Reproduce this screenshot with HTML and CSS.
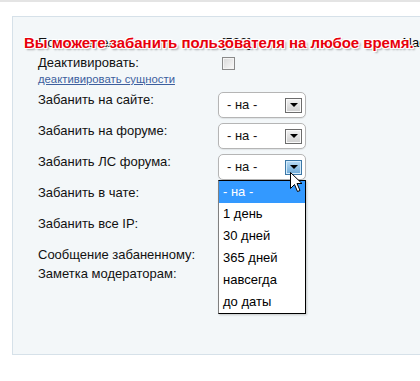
FILE: index.html
```html
<!DOCTYPE html>
<html lang="ru">
<head>
    <meta charset="UTF-8">
    <title>Бан пользователя</title>
    <link rel="stylesheet" href="styles.css">
</head>
<body>
    <div class="panel">
        <div class="notice">Вы можете забанить пользователя на любое время.</div>
        <div class="form">
            <div class="row head">
                <span class="label">Пользователь:</span>
                <span class="value">[533] <span class="name">Nagibator</span></span>
            </div>
            <div class="row">
                <span class="label">Деактивировать:</span>
                <span class="value"><span class="check"></span></span>
            </div>
            <div class="row link-row">
                <a href="#">деактивировать сущности</a>
            </div>
            <div class="row sel">
                <span class="label">Забанить на сайте:</span>
                <div class="select"><span>- на -</span><i class="arrow"></i></div>
            </div>
            <div class="row sel">
                <span class="label">Забанить на форуме:</span>
                <div class="select"><span>- на -</span><i class="arrow"></i></div>
            </div>
            <div class="row sel">
                <span class="label">Забанить ЛС форума:</span>
                <div class="select open"><span>- на -</span><i class="arrow"></i>
                    <ul class="options">
                        <li class="active">- на -</li>
                        <li>1 день</li>
                        <li>30 дней</li>
                        <li>365 дней</li>
                        <li>навсегда</li>
                        <li>до даты</li>
                    </ul>
                </div>
            </div>
            <div class="row sel">
                <span class="label">Забанить в чате:</span>
                <div class="select"><span>- на -</span><i class="arrow"></i></div>
            </div>
            <div class="row sel">
                <span class="label">Забанить все IP:</span>
                <div class="select"><span>- на -</span><i class="arrow"></i></div>
            </div>
            <div class="row msg">
                <span class="label">Сообщение забаненному:</span>
            </div>
            <div class="row">
                <span class="label">Заметка модераторам:</span>
            </div>
        </div>
    </div>
    <svg class="cursor" width="13" height="21" viewBox="0 0 13 21">
        <path d="M0.5 0.5 L0.5 16.5 L4.5 12.5 L7.5 19.5 L10 18.5 L7 11.5 L12 11.5 Z" fill="#fff" stroke="#000" stroke-width="1"/>
    </svg>
</body>
</html>
```

FILE: styles.css
```css
body {
    margin: 0;
    font-family: "Liberation Sans", Arial, sans-serif;
    font-size: 13px;
    color: #111;
    background: #fff;
    border-top: 2px solid #e4e4e4;
    overflow: hidden;
}
.panel {
    position: relative;
    margin: 14px -1px 0 12px;
    padding: 18px 0 72px 25px;
    background: #f3f7f9;
    border: 1px solid #d6e1e9;
    overflow: hidden;
}
.notice {
    position: absolute;
    top: 17px;
    left: 11px;
    font-size: 15px;
    line-height: 18px;
    font-weight: bold;
    color: #e8000b;
    white-space: nowrap;
    letter-spacing: -0.05px;
    z-index: 2;
    text-shadow: -1px -1px 0 #fff, 1px -1px 0 #fff, -1px 1px 0 #fff, 1px 1px 0 #fff,
        2px 2px 2px rgba(0, 0, 0, 0.35);
}
.form {
    display: flex;
    flex-direction: column;
}
.row {
    display: grid;
    grid-template-columns: 180px 1fr;
    align-items: start;
    line-height: 16px;
}
.head {
    margin-bottom: 4px;
}
.head .value {
    padding-left: 4px;
    white-space: nowrap;
    overflow: hidden;
}
.head .name {
    margin-left: 148px;
    color: #000;
}
.check {
    display: block;
    width: 11px;
    height: 11px;
    margin: 2px 0 0 4px;
    border: 1px solid #8a8a8a;
    background: linear-gradient(135deg, #d8d8d8, #fafafa);
    box-shadow: inset 0 0 0 1px #f4f4f4;
}
.link-row {
    display: block;
    margin: 1px 0 6px;
    line-height: 14px;
}
.link-row a {
    font-size: 11.3px;
    color: #3d5f9e;
}
.sel {
    margin-bottom: 5px;
}
.msg {
    margin-bottom: 3px;
}
.select {
    position: relative;
    box-sizing: border-box;
    width: 88px;
    height: 26px;
    border: 1px solid #b5b5b5;
    border-radius: 5px;
    background: #fff;
    display: flex;
    align-items: center;
    justify-content: space-between;
    padding: 0 3px 0 8px;
    box-shadow: 0 1px 1px rgba(0, 0, 0, 0.08);
}
.arrow {
    box-sizing: border-box;
    width: 17px;
    height: 15px;
    border: 1px solid #6c6c6c;
    background: linear-gradient(#f2f2f2, #cfcfcf);
    box-shadow: inset 0 0 0 1px #fafafa;
    display: flex;
    align-items: center;
    justify-content: center;
}
.arrow::after {
    content: "";
    border-left: 4px solid transparent;
    border-right: 4px solid transparent;
    border-top: 4px solid #000;
}
.open .arrow {
    border-color: #3b77a6;
    background: linear-gradient(#b9dcf5, #6ea9d6);
    box-shadow: inset 0 0 0 1px #d4ebfb;
}
.options {
    position: absolute;
    top: 25px;
    left: -1px;
    width: 88px;
    box-sizing: border-box;
    margin: 0;
    padding: 0;
    list-style: none;
    background: #fff;
    border: 1px solid #000;
    border-left-color: #808080;
    z-index: 3;
    box-shadow: 1px 1px 2px rgba(0, 0, 0, 0.2);
}
.options li {
    height: 22px;
    line-height: 22px;
    padding-left: 4px;
    color: #000;
}
.options li.active {
    background: #3399ff;
    color: #fff;
}
.cursor {
    position: absolute;
    left: 290px;
    top: 172px;
    z-index: 5;
}
```
